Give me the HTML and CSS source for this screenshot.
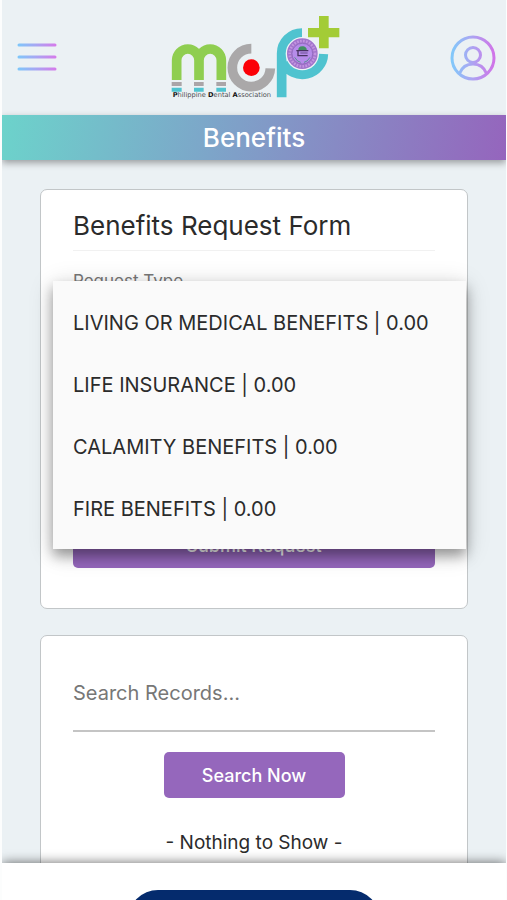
FILE: index.html
```html
<!DOCTYPE html>
<html lang="en">
<head>
<meta charset="utf-8">
<meta name="viewport" content="width=device-width, initial-scale=1">
<title>Benefits</title>
<link rel="stylesheet" href="styles.css">
</head>
<body>
<div class="app">
  <header class="topbar">
    <button class="icon-button" type="button" aria-label="Menu">
      <svg width="40" height="46" viewBox="0 0 40 46" aria-hidden="true">
        <defs>
          <linearGradient id="accent" gradientUnits="userSpaceOnUse" x1="0" y1="0" x2="40" y2="0">
            <stop offset="0" stop-color="#7cc8fa"/>
            <stop offset=".45" stop-color="#a5a8f3"/>
            <stop offset="1" stop-color="#d878ea"/>
          </linearGradient>
        </defs>
        <path d="M2 10H38M2 22H38M2 34H38" fill="none" stroke="url(#accent)" stroke-width="3" stroke-linecap="round"/>
      </svg>
    </button>
    <svg class="logo" viewBox="0 0 570 315" role="img" aria-label="MCP Plus">
      <g fill="none" stroke-width="29">
        <path d="M53 225V166a33.5 34 0 0 1 67 0V225M120 166a33.5 34 0 0 1 67 0V225" stroke="#8fce50"/>
        <path d="M38 237H68M105 237H134M172 237H201" stroke="#aaa5a8" stroke-width="12"/>
        <path d="M38 254H68M105 254H134M172 254H201" stroke="#4fc3cf" stroke-width="12"/>
        <path d="M277 131A57 57 0 1 0 334 190" stroke="#aaa8a9"/>
        <path d="M429 84A61 61 0 0 0 368 145V277M493 147A63 63 0 0 1 374 174" stroke="#4fc3cf"/>
      </g>
      <circle cx="277" cy="188" r="25" fill="#fb0007"/>
      <circle cx="430" cy="146" r="50" fill="#eef3f6"/>
      <circle cx="430" cy="146" r="46" fill="#a174cb"/>
      <circle cx="430" cy="146" r="38" fill="none" stroke="#c394e0" stroke-width="8" stroke-dasharray="5 4"/>
      <circle cx="430" cy="146" r="31" fill="#b68cea" stroke="#8a62b4" stroke-width="2"/>
      <path d="M430 124c-9 0-13 6-12 12h25c1-6-4-12-13-12Z" fill="#438f62"/>
      <path d="M412 137h36M415 152h31M417 137v15" fill="none" stroke="#493463" stroke-width="4"/>
      <path d="M424 144h22" fill="none" stroke="#6b4f8f" stroke-width="3"/>
      <path d="M407 157q8 14 18 15M453 157q-8 14-18 15" fill="none" stroke="#5a8f95" stroke-width="3"/>
      <path d="M480 33h29v36h32v28h-32v33h-29V97h-33V69h33Z" fill="#a3cc36"/>
      <text class="logo-caption" x="41" y="277"><tspan class="logo-initial">P</tspan>hilippine <tspan class="logo-initial">D</tspan>ental <tspan class="logo-initial">A</tspan>ssociation</text>
    </svg>
    <button class="icon-button" type="button" aria-label="Profile">
      <svg width="46" height="46" viewBox="0 0 46 46" aria-hidden="true">
        <defs>
          <linearGradient id="accent-wide" x1="0" y1="0" x2="1" y2="0">
            <stop offset="0" stop-color="#82c8fa"/>
            <stop offset=".45" stop-color="#aaa6f2"/>
            <stop offset="1" stop-color="#d074e8"/>
          </linearGradient>
        </defs>
        <path d="M23 2a21 21 0 1 1 0 42a21 21 0 1 1 0-42ZM23 12.500a7.500 7.500 0 1 1 0 15a7.500 7.500 0 1 1 0-15ZM9.500 38.500C12 32 17 29 23 29s11 3 13.500 9.500" fill="none" stroke="url(#accent-wide)" stroke-width="3"/>
      </svg>
    </button>
  </header>
  <h1 class="page-title">Benefits</h1>

  <main class="content">
    <section class="card request">
      <h2 class="card-title">Benefits Request Form</h2>
      <form class="request-form">
        <label class="field-label" for="request-type">Request Type</label>
        <select class="request-select" id="request-type"><option></option></select>
        <button class="button" type="submit">Submit Request</button>
      </form>
      <div class="options" role="listbox" aria-label="Request Type">
        <button class="option" type="button" role="option">LIVING OR MEDICAL BENEFITS | 0.00</button>
        <button class="option" type="button" role="option">LIFE INSURANCE | 0.00</button>
        <button class="option" type="button" role="option">CALAMITY BENEFITS | 0.00</button>
        <button class="option" type="button" role="option">FIRE BENEFITS | 0.00</button>
      </div>
    </section>
    <section class="card records">
      <input class="search" type="search" placeholder="Search Records..." aria-label="Search Records">
      <button class="button button-half" type="button">Search Now</button>
      <p class="empty">- Nothing to Show -</p>
    </section>
  </main>

  <footer class="dock">
    <button class="dock-button" type="button" aria-label="Home"></button>
  </footer>
</div>
</body>
</html>
```

FILE: styles.css
```css
* {
  box-sizing: border-box;
}

body {
  margin: 0;
  padding: 0 1px 0 2px;
  background: #fcfdfd;
  color: #2b2b2b;
  font-family: Inter, "Liberation Sans", sans-serif;
  font-size: 20px;
}

button,
input,
select {
  font: inherit;
}

.app {
  display: flex;
  flex-direction: column;
  height: 100vh;
  overflow: hidden;
  background: #ebf1f4;
}

.topbar {
  display: flex;
  flex: none;
  align-items: center;
  justify-content: space-between;
  padding: 5px 10px 5px 15px;
}

.icon-button {
  display: flex;
  padding: 0;
  border: 0;
  background: none;
}

.logo {
  width: 190px;
  height: 105px;
}

.logo-caption {
  fill: #4b4d50;
  font-family: "DejaVu Sans", sans-serif;
  font-size: 20px;
}

.logo-initial {
  fill: #111;
  font-weight: 700;
}

.page-title {
  position: relative;
  z-index: 1;
  flex: none;
  margin: 0;
  background: linear-gradient(100deg, #6cd3cb, #7da5c9 42%, #9565bd);
  box-shadow: 0 3px 7px rgba(0, 0, 0, 0.35);
  color: #fff;
  font-size: 26px;
  font-weight: 500;
  line-height: 45px;
  text-align: center;
}

.content {
  display: flex;
  flex: 1;
  flex-direction: column;
  gap: 26px;
  min-height: 0;
  padding: 29px 38px 0;
  overflow-y: auto;
  scrollbar-width: none;
}

.card {
  flex: none;
  padding: 20px 32px 40px;
  border: 1px solid #c2c6c8;
  border-radius: 7px;
  background: #fff;
}

.request {
  position: relative;
  z-index: 1;
}

.card-title {
  margin: 0;
  padding-bottom: 8px;
  border-bottom: 1px solid #f1f1f1;
  font-size: 26px;
  font-weight: 400;
  line-height: 32px;
}

.request-form {
  display: flex;
  flex-direction: column;
  padding-top: 20px;
}

.field-label {
  color: #777;
  font-size: 17px;
  line-height: 20px;
}

.request-select {
  height: 48px;
  margin: 8px 0 175px;
  border: 0;
  border-bottom: 2px solid #c8c8c8;
  background: #fff;
}

.button {
  height: 46px;
  padding: 0;
  border: 0;
  border-radius: 5px;
  background: #9567bc;
  color: #fff;
  font-size: 18px;
  font-weight: 500;
}

.button-half {
  width: 50%;
}

.options {
  position: absolute;
  top: 91px;
  right: 1px;
  left: 12px;
  padding: 11px 0 9px;
  background: #fafafa;
  box-shadow: 0 7px 12px rgba(0, 0, 0, 0.35), 0 4px 24px rgba(0, 0, 0, 0.16);
}

.option {
  display: block;
  width: 100%;
  height: 62px;
  padding: 0 20px;
  border: 0;
  background: none;
  color: #2b2b2b;
  text-align: left;
  white-space: nowrap;
}

.records {
  display: flex;
  flex-direction: column;
  align-items: center;
}

.search {
  width: 100%;
  height: 76px;
  margin-bottom: 20px;
  padding: 0;
  border: 0;
  border-bottom: 2px solid #c4c4c4;
  border-radius: 0;
  outline: 0;
  background: none;
  appearance: none;
}

.search::placeholder {
  color: #777;
}

.empty {
  margin: 32px 0 0;
  font-size: 19px;
  line-height: 26px;
}

.dock {
  z-index: 2;
  display: flex;
  flex: none;
  justify-content: center;
  height: 37px;
  padding-top: 27px;
  background: #fff;
  box-shadow: 0 0 12px rgba(0, 0, 0, 0.6);
}

.dock-button {
  flex: none;
  width: 50%;
  height: 60px;
  border: 0;
  border-radius: 30px;
  background: #052b6d;
}
```
